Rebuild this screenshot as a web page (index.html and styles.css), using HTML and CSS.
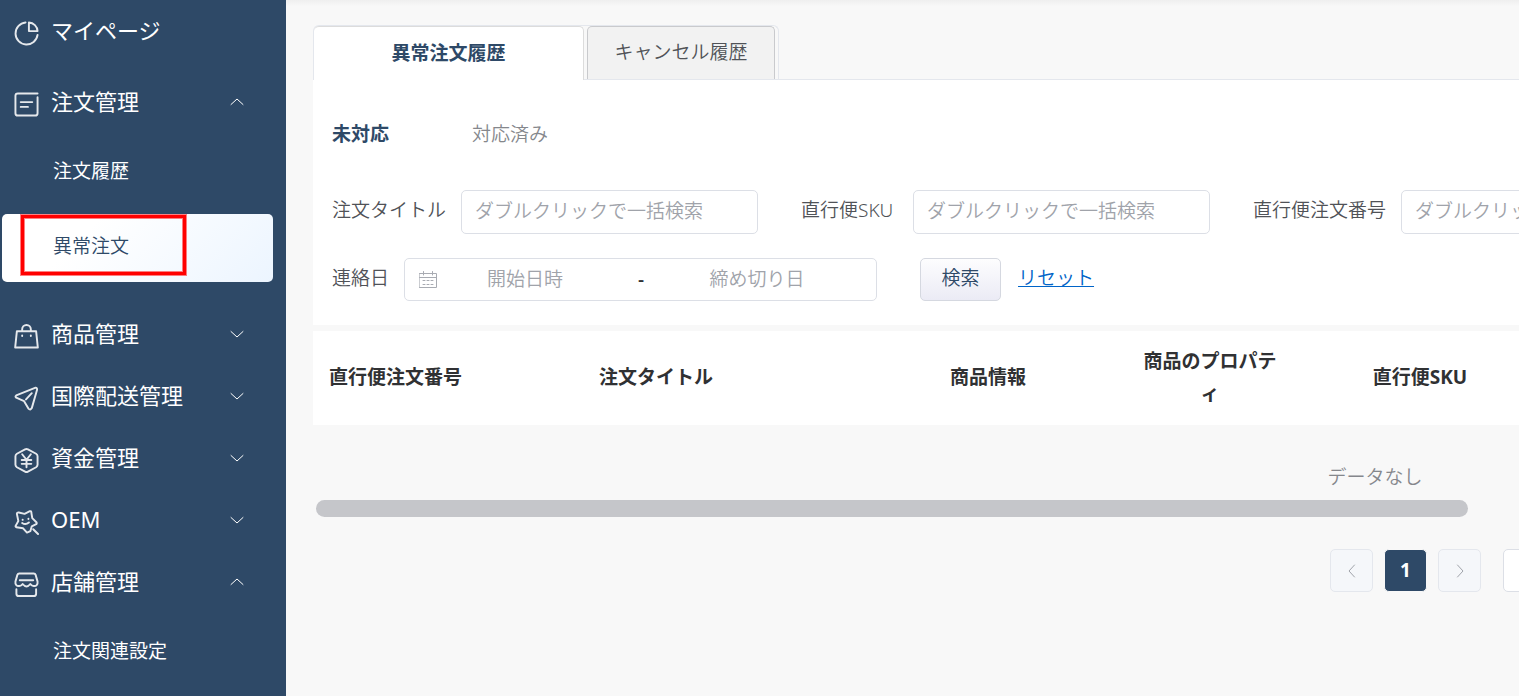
FILE: index.html
```html
<!DOCTYPE html>
<html lang="ja">
<head>
<meta charset="utf-8">
<title>異常注文</title>
<link rel="stylesheet" href="styles.css">
</head>
<body>
<div class="app">
  <nav class="sidebar">
    <a class="menu-item" href="#">
      <svg class="icon" viewBox="0 0 26 26"><path d="M12 1.5A11.5 11.5 0 1 0 24.500 14.500"/><path d="M15.500 1.500V10.500H24.500A9.500 9.500 0 0 0 15.500 1.500Z"/></svg>
      <span>マイページ</span>
    </a>
    <div class="menu-group spaced">
      <button class="menu-item" type="button">
        <svg class="icon" viewBox="0 0 26 26"><path d="M24.500 1.500H4Q1.500 1.500 1.500 4V22Q1.500 24.500 4 24.500H22Q24.500 24.500 24.500 22V5.500"/><path d="M7 10.500H19M7 15.500H14.500"/></svg>
        <span>注文管理</span>
        <svg class="arrow" viewBox="0 0 14 14"><path d="M1 9.500L7 4L13 9.500"/></svg>
      </button>
      <div class="submenu">
        <a class="sub-item" href="#">注文履歴</a>
        <a class="sub-item active" href="#">異常注文<i class="marker"></i></a>
      </div>
    </div>
    <button class="menu-item" type="button">
      <svg class="icon" viewBox="0 0 26 26"><path d="M3 7.500H23L24.800 24.500H1.200Z"/><path d="M8.500 7V5.500A4.500 4.500 0 0 1 17.500 5.500V7"/><path d="M8.500 12V12.500M17.500 12V12.500"/></svg>
      <span>商品管理</span>
      <svg class="arrow" viewBox="0 0 14 14"><path d="M1 4.500L7 10L13 4.500"/></svg>
    </button>
    <button class="menu-item" type="button">
      <svg class="icon" viewBox="0 0 26 26"><path d="M22.500 1.700L2.300 9.800Q.800 11 2.300 12.200L10.500 15.800L15 23.500Q17 25.500 18.500 23L24 4Q24.200 1.700 22.500 1.700Z"/><path d="M18.500 7.500L12.500 14"/></svg>
      <span>国際配送管理</span>
      <svg class="arrow" viewBox="0 0 14 14"><path d="M1 4.500L7 10L13 4.500"/></svg>
    </button>
    <button class="menu-item" type="button">
      <svg class="icon" viewBox="0 0 26 26"><path d="M11.500 1.500Q13 .700 14.500 1.500L23 6Q24.500 7 24.500 8.500V17.500Q24.500 19 23 20L14.500 24.500Q13 25.300 11.500 24.500L3 20Q1.500 19 1.500 17.500V8.500Q1.500 7 3 6Z"/><path d="M8.500 6.500L13 12.200L17.500 6.500M8 12.500H18M8 16.500H18M13 12.500V20"/></svg>
      <span>資金管理</span>
      <svg class="arrow" viewBox="0 0 14 14"><path d="M1 4.500L7 10L13 4.500"/></svg>
    </button>
    <button class="menu-item" type="button">
      <svg class="icon" viewBox="0 0 26 26"><path d="M17 22L13.500 23.500L9.500 19L2.500 18Q1 17.500 2 16L4.500 11.500L3 4Q3 2.300 5 2.600L11 4L16.500 1.200Q18 .900 18 2.500L19 8.500L23.500 13Q24 14.500 22.500 15L18.500 17Z"/><path d="M9 10V10.300M15 9V9.300M8.500 13.500Q12 16 15.500 13M20 20L25 25"/></svg>
      <span>OEM</span>
      <svg class="arrow" viewBox="0 0 14 14"><path d="M1 4.500L7 10L13 4.500"/></svg>
    </button>
    <div class="menu-group">
      <button class="menu-item" type="button">
        <svg class="icon" viewBox="0 0 26 26"><path d="M5.500 1.500H20.500Q22 1.500 22.500 3L24.500 10C25 13 23 15 20.500 14.500Q18.500 14.500 17 12.500Q15 15 13 15Q11 15 9 12.500Q7.500 14.500 5.500 14.500C3 15 1 13 1.500 10L3.500 3Q4 1.500 5.500 1.500Z"/><path d="M6 8.500H20M2.500 18V22.500Q2.500 25 5 25H20.500Q23 25 23 22.500V18"/></svg>
        <span>店舗管理</span>
        <svg class="arrow" viewBox="0 0 14 14"><path d="M1 9.500L7 4L13 9.500"/></svg>
      </button>
      <div class="submenu">
        <a class="sub-item" href="#">注文関連設定</a>
      </div>
    </div>
  </nav>

  <main class="main">
    <div class="tab-bar">
      <div class="tabs" role="tablist">
        <button class="tab selected" type="button" role="tab" aria-selected="true">異常注文履歴</button>
        <button class="tab" type="button" role="tab" aria-selected="false">キャンセル履歴</button>
      </div>
    </div>

    <section class="panel">
      <div class="status">
        <button class="status-item current" type="button">未対応</button>
        <button class="status-item" type="button">対応済み</button>
      </div>
      <form class="filters">
        <div class="filter-row">
          <div class="field"><label for="title">注文タイトル</label><input class="box" id="title" type="text" placeholder="ダブルクリックで一括検索"></div>
          <div class="field"><label class="label-sku" for="sku">直行便SKU</label><input class="box" id="sku" type="text" placeholder="ダブルクリックで一括検索"></div>
          <div class="field"><label for="order">直行便注文番号</label><input class="box" id="order" type="text" placeholder="ダブルクリックで一括検索"></div>
        </div>
        <div class="filter-row">
          <div class="field">
            <label for="from">連絡日</label>
            <div class="range">
              <svg class="calendar" viewBox="0 0 18 18"><path d="M.5 2.500H17.500V16.500H.5ZM.5 6.500H17.500M4.500 .5V4M13.500 .5V4"/><path d="M4 9.500H6M8 9.500H10M12 9.500H14M4 13.500H6M8 13.500H10M12 13.500H14"/></svg>
              <input id="from" type="text" placeholder="開始日時">
              <span class="dash">-</span>
              <input type="text" placeholder="締め切り日" aria-label="締め切り日">
            </div>
          </div>
          <div class="actions">
            <button class="search" type="button">検索</button>
            <a class="reset" href="#">リセット</a>
          </div>
        </div>
      </form>
    </section>

    <div class="table-wrap">
      <table class="orders">
        <colgroup><col class="c-order"><col class="c-title"><col class="c-info"><col class="c-prop"><col class="c-sku"><col></colgroup>
        <thead>
          <tr><th>直行便注文番号</th><th>注文タイトル</th><th>商品情報</th><th>商品のプロパティ</th><th>直行便SKU</th><th></th></tr>
        </thead>
        <tbody><tr><td colspan="6">データなし</td></tr></tbody>
      </table>
    </div>
    <div class="scroll-track"><div class="scroll-thumb"></div></div>

    <div class="pagination">
      <button class="page" type="button" aria-label="前へ"><svg viewBox="0 0 14 14"><path d="M9.500 1L4 7L9.500 13"/></svg></button>
      <button class="page on" type="button">1</button>
      <button class="page" type="button" aria-label="次へ"><svg viewBox="0 0 14 14"><path d="M4.500 1L10 7L4.500 13"/></svg></button>
      <select class="page-size" aria-label="表示件数"><option></option></select>
    </div>
  </main>
</div>
</body>
</html>
```
FILE: styles.css
```css
* { box-sizing: border-box; }
body {
  margin: 0;
  background: #f8f8f8;
  color: #505257;
  font: 350 19px/32px "Noto Sans", "Noto Sans CJK JP", sans-serif;
  overflow: hidden;
}
button, input, select { font: inherit; color: inherit; margin: 0; }
button { border: 0; background: none; padding: 0; cursor: pointer; }
a { text-decoration: none; color: inherit; }
svg { fill: none; stroke: currentColor; stroke-linecap: round; stroke-linejoin: round; }

.app { display: flex; min-height: 100vh; }

.sidebar { flex: none; width: 286px; background: #2e4967; color: #fff; font-weight: 400; }
.menu-item {
  display: flex;
  align-items: center;
  width: 100%;
  height: 62px;
  padding: 0 42px 0 14px;
  font-size: 22px;
  text-align: left;
}
.menu-item span { flex: 1; margin-left: 12px; padding-bottom: 2px; }
.icon { width: 25px; height: 25px; margin-top: 4px; stroke-width: 2; opacity: .88; }
.arrow { width: 14px; height: 14px; stroke-width: 1; }
.spaced { margin: 9px 0 21px; }
.submenu { display: flex; flex-direction: column; gap: 7px; padding: 6px 13px 0 2px; }
.sub-item {
  position: relative;
  height: 68px;
  padding: 16px 0 0 51px;
  border-radius: 5px;
}
.sub-item.active { background: linear-gradient(135deg, #fff 30%, #ecf5ff); color: #2e4967; font-weight: 350; }
.marker {
  position: absolute;
  left: 19px;
  top: 1px;
  width: 165px;
  height: 60px;
  border: 3px solid #f00;
  box-shadow: 0 0 0 1px #ff000080, inset 0 0 0 1px #ff000080;
}

.main {
  flex: 1;
  min-width: 0;
  padding: 25px 0 0 27px;
  overflow: hidden;
  background: linear-gradient(#efefef, #f8f8f8 6px);
}
.tab-bar { display: flex; border-bottom: 1px solid #e4e7ed; }
.tabs {
  display: flex;
  gap: 3px;
  padding-right: 3px;
  border: 1px solid #e4e7ed;
  border-bottom: 0;
  border-radius: 6px 6px 0 0;
}
.tab {
  width: 188px;
  height: 53px;
  padding-bottom: 2px;
  border: 1px solid #c9cacd;
  border-bottom: 0;
  border-radius: 5px 5px 0 0;
  background: #f2f2f2;
}
.tab.selected {
  width: 270px;
  height: 54px;
  margin-bottom: -1px;
  border-color: #dcdcdc;
  border-left: 0;
  background: #fff;
  color: #2e4967;
  font-weight: 700;
}

.panel { background: #fff; padding: 38px 0 24px 19px; }
.status { display: flex; gap: 83px; }
.status-item { color: #85878c; line-height: 32px; }
.status-item.current { color: #2e4967; font-weight: 700; }
.filters { display: flex; flex-direction: column; gap: 24px; margin-top: 40px; }
.filter-row { display: flex; gap: 43px; }
.field { display: flex; flex: none; gap: 15px; }
.field label { line-height: 40px; }
.label-sku { min-width: 97px; }
.box, .range { border: 1px solid #dcdfe6; border-radius: 5px; background: #fff; }
.box { width: 297px; height: 44px; padding: 0 13px 2px; }
input::placeholder { color: #a0a3aa; opacity: 1; }
.range { display: flex; align-items: center; width: 473px; height: 43px; padding: 0 31px 0 14px; }
.calendar { flex: none; width: 18px; height: 18px; color: #a8abb2; stroke-width: 1; }
.range input {
  width: 176px;
  min-width: 0;
  border: 0;
  padding: 0 0 2px;
  background: none;
  text-align: center;
}
.dash { flex: 1; padding-bottom: 2px; color: #303133; font-weight: 500; text-align: center; }
.actions { display: flex; gap: 17px; }
.search {
  width: 81px;
  height: 43px;
  padding-bottom: 3px;
  border: 1px solid #d5d8e0;
  border-radius: 5px;
  background: linear-gradient(#fdfdfe, #ebebf5);
  color: #2e4967;
}
.reset { color: #0064c8; line-height: 40px; text-decoration: underline; text-underline-offset: 1px; text-decoration-thickness: 1px; }

.table-wrap { margin-top: 6px; overflow: hidden; }
.orders { width: 2124px; table-layout: fixed; border-collapse: collapse; text-align: center; }
.c-order { width: 165px; }
.c-title { width: 356px; }
.c-info { width: 308px; }
.c-prop { width: 136px; }
.c-sku { width: 284px; }
.orders th { height: 94px; padding: 0 0 2px; background: #fff; color: #303133; font-weight: 700; word-break: break-all; }
.orders td { height: 75px; padding: 28px 0 0; color: #85878c; }
.scroll-track { padding: 0 3px; }
.scroll-thumb { width: 96%; height: 17px; border-radius: 9px; background: #c5c6ca; }

.pagination { display: flex; gap: 11px; margin-top: 32px; padding-left: 1017px; }
.page {
  display: grid;
  place-items: center;
  flex: none;
  width: 43px;
  height: 43px;
  border: 1px solid #e4e7ed;
  border-radius: 5px;
  background: #f5f7fa;
  color: #a0a3aa;
}
.page svg { width: 14px; height: 14px; }
.page.on { padding-bottom: 2px; border-color: #f8f8f8; background: #2e4967; color: #fff; font-weight: 700; }
.page-size {
  flex: none;
  width: 140px;
  height: 43px;
  margin-left: 11px;
  border: 1px solid #dcdfe6;
  border-radius: 5px;
  background: #fff;
}
```
